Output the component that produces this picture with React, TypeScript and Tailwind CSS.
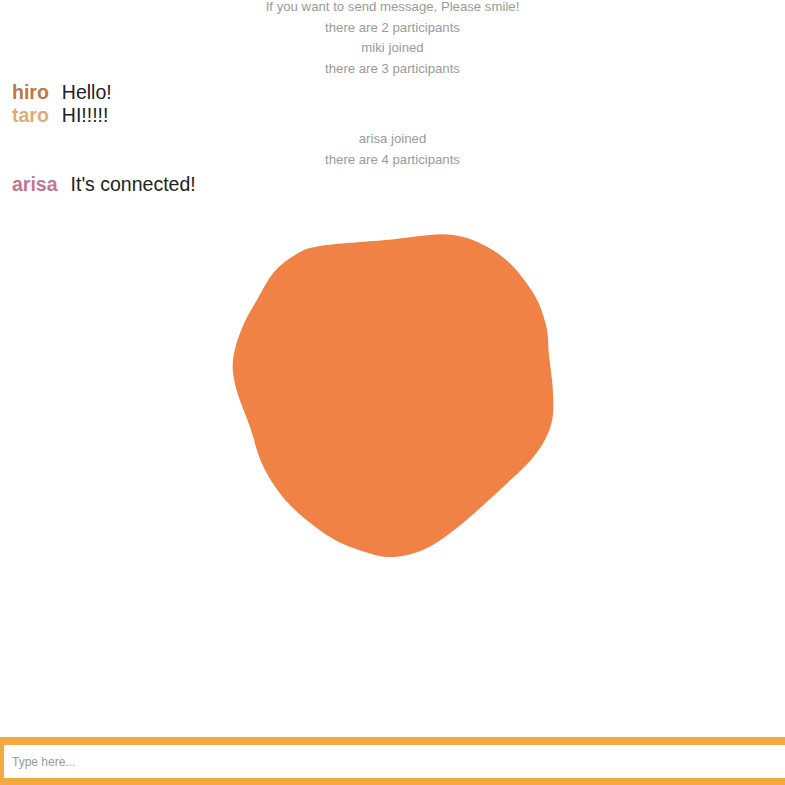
import React from 'react';

type Line =
  | { kind: 'sys'; text: string }
  | { kind: 'msg'; name: string; color: string; text: string };

const groups: Line[][] = [
  [
    { kind: 'sys', text: 'If you want to send message, Please smile!' },
    { kind: 'sys', text: 'there are 2 participants' },
    { kind: 'sys', text: 'miki joined' },
    { kind: 'sys', text: 'there are 3 participants' },
  ],
  [
    { kind: 'msg', name: 'hiro', color: 'text-[#bf773f]', text: 'Hello!' },
    { kind: 'msg', name: 'taro', color: 'text-[#dcae76]', text: 'HI!!!!!' },
  ],
  [
    { kind: 'sys', text: 'arisa joined' },
    { kind: 'sys', text: 'there are 4 participants' },
  ],
  [{ kind: 'msg', name: 'arisa', color: 'text-[#c27693]', text: "It's connected!" }],
];

// outline of the blob, clockwise
const pts: [number, number][] = [
  [320, 246], [387, 240], [453, 235], [500, 255], [532, 291], [546, 325],
  [549, 355], [553, 393], [551, 425], [535, 455], [503, 487], [458, 527],
  [425, 549], [393, 557], [365, 552], [330, 537], [290, 505], [264, 468],
  [250, 427], [236, 388], [233, 360], [242, 328], [258, 298], [274, 272], [295, 255],
];

function smooth(p: [number, number][]) {
  const n = p.length;
  let d = `M${p[0][0]},${p[0][1]}`;
  for (let i = 0; i < n; i++) {
    const p0 = p[(i - 1 + n) % n];
    const p1 = p[i];
    const p2 = p[(i + 1) % n];
    const p3 = p[(i + 2) % n];
    const c1x = p1[0] + (p2[0] - p0[0]) / 6;
    const c1y = p1[1] + (p2[1] - p0[1]) / 6;
    const c2x = p2[0] - (p3[0] - p1[0]) / 6;
    const c2y = p2[1] - (p3[1] - p1[1]) / 6;
    d += ` C${c1x},${c1y} ${c2x},${c2y} ${p2[0]},${p2[1]}`;
  }
  return d + 'Z';
}

const Blob = () => (
  <svg className="absolute inset-0 pointer-events-none" width="785" height="785" viewBox="0 0 785 785">
    <path d={smooth(pts)} fill="#ef8244" />
  </svg>
);

export default function App() {
  return (
    <div className="relative h-screen w-full overflow-hidden bg-white flex flex-col font-['Liberation_Sans',Arial,sans-serif]">
      <Blob />
      <div className="relative -mt-[3px]">
        {groups.map((g, gi) => (
          <div key={gi} className={gi === 0 ? '' : gi === 3 ? 'mt-[3px]' : 'mt-[2px]'}>
            {g.map((l, i) =>
              l.kind === 'sys' ? (
                <div key={i} className="text-center text-[13.2px] leading-[20.5px] text-[#9a9a9a]">
                  {l.text}
                </div>
              ) : (
                <div key={i} className="flex items-baseline gap-[13px] pl-3 text-[19.5px] leading-[23px]">
                  <span className={`font-bold ${l.color}`}>{l.name}</span>
                  <span className="text-[#222]">{l.text}</span>
                </div>
              )
            )}
          </div>
        ))}
      </div>
      <div className="relative mt-auto h-[48px]">
        <input
          className="w-[800px] h-[49px] border-t-8 border-l-4 border-b-8 border-r-4 border-[#f2a93f] bg-white pl-2 text-[12px] text-[#333] outline-none placeholder:text-[#999]"
          placeholder="Type here..."
        />
      </div>
    </div>
  );
}
